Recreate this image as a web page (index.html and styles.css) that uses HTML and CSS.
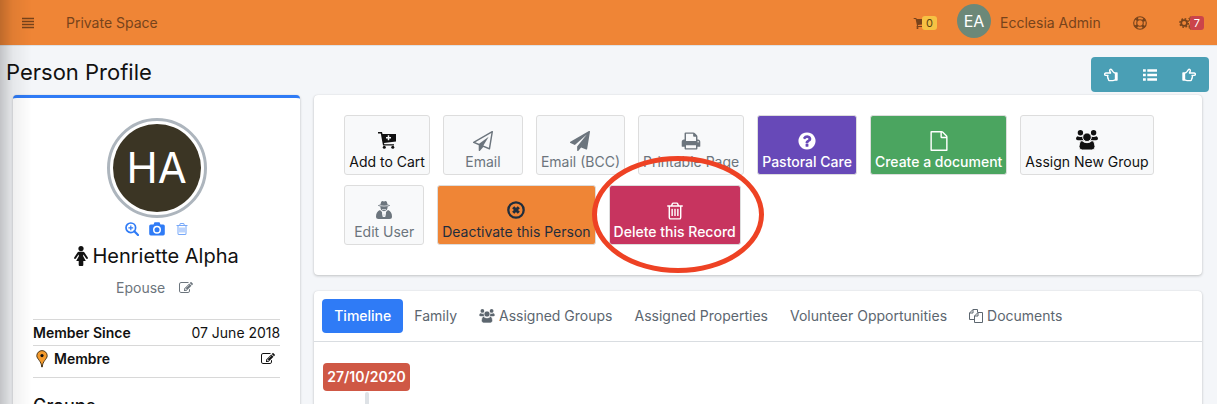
FILE: index.html
```html
<!DOCTYPE html>
<html lang="en">
<head>
<meta charset="utf-8">
<title>Person Profile</title>
<link rel="stylesheet" href="styles.css">
</head>
<body>
<svg class="sprite" aria-hidden="true">
  <symbol id="i-plane" viewBox="0 0 1792 1792"><path d="M1764 11q33 24 27 64l-256 1536q-5 29-32 45-14 8-31 8-11 0-24-5l-453-185-242 295q-18 23-49 23-13 0-22-4-19-7-30.500-23.500t-11.500-36.500v-349l864-1059-1069 925-395-162q-37-14-40-55-2-40 32-59l1664-960q15-9 32-9 20 0 36 11z"/></symbol>
  <symbol id="i-plane-o" viewBox="0 0 1792 1792"><path d="M1764 11q33 24 27 64l-256 1536q-5 29-32 45-14 8-31 8-11 0-24-5l-527-215-298 327q-18 21-47 21-14 0-23-4-19-7-30-23.500t-11-36.500v-452l-472-193q-37-14-40-55-3-39 32-59l1664-960q35-21 68 2zm-342 1499l221-1323-1434 827 336 137 863-639-478 797z"/></symbol>
  <symbol id="i-cart" viewBox="0 0 1792 1792"><path d="M704 1536q0 52-38 90t-90 38-90-38-38-90 38-90 90-38 90 38 38 90zm896 0q0 52-38 90t-90 38-90-38-38-90 38-90 90-38 90 38 38 90zm128-1088v512q0 24-16.500 42.500t-40.500 21.500l-1044 122q13 60 13 70 0 16-24 64h920q26 0 45 19t19 45-19 45-45 19h-1024q-26 0-45-19t-19-45q0-11 8-31.500t16-36 21.500-40 15.500-29.500l-177-823h-204q-26 0-45-19t-19-45 19-45 45-19h256q16 0 28.500 6.500t19.500 15.500 13 24.500 8 26 5.500 29.500 4.500 26h1201q26 0 45 19t19 45z"/></symbol>
  <symbol id="i-cart-plus" viewBox="0 0 18 18"><path d="M0 1h4l.5 2H18v7.500L6 12l.3 1.200H16v1.300H5L2.800 2.400H0z"/><circle cx="6.300" cy="16.200" r="1.500"/><circle cx="14.800" cy="16.200" r="1.500"/><path d="M10.500 4.300v5M8 6.800h5" stroke="#f8f9fa" stroke-width="1.500"/></symbol>
  <symbol id="i-print" viewBox="0 0 1792 1792"><path d="M448 1536h896v-256h-896v256zm0-640h896v-384h-160q-40 0-68-28t-28-68v-160h-640v640zm1152 64q0-26-19-45t-45-19-45 19-19 45 19 45 45 19 45-19 19-45zm128 0v416q0 13-9.500 22.500t-22.500 9.500h-224v160q0 40-28 68t-68 28h-960q-40 0-68-28t-28-68v-160h-224q-13 0-22.500-9.500t-9.500-22.500v-416q0-79 56.500-135.500t135.500-56.500h64v-544q0-40 28-68t68-28h672q40 0 88 20t76 48l152 152q28 28 48 76t20 88v256h64q79 0 135.500 56.500t56.500 135.500z"/></symbol>
  <symbol id="i-question" viewBox="0 0 1792 1792"><path d="M1024 1376v-192q0-14-9-23t-23-9h-192q-14 0-23 9t-9 23v192q0 14 9 23t23 9h192q14 0 23-9t9-23zm256-672q0-88-55.500-163t-138.500-116-170-41q-243 0-371 213-15 24 8 42l132 100q7 6 19 6 16 0 25-12 53-68 86-92 34-24 86-24 48 0 85.500 26t37.500 59q0 38-20 61t-68 45q-63 28-115.500 86.500t-52.500 125.500v36q0 14 9 23t23 9h192q14 0 23-9t9-23q0-19 21.500-49.500t54.500-49.500q32-18 49-28.500t46-35 44.500-48 28-60.500 12.500-81zm384 192q0 209-103 385.500t-279.500 279.500-385.500 103-385.500-103-279.500-279.500-103-385.500 103-385.500 279.500-279.500 385.500-103 385.500 103 279.500 279.500 103 385.500z"/></symbol>
  <symbol id="i-file" viewBox="0 0 1792 1792"><path d="M1596 380q28 28 48 76t20 88v1152q0 40-28 68t-68 28h-1344q-40 0-68-28t-28-68v-1600q0-40 28-68t68-28h896q40 0 88 20t76 48zm-444-244v376h376q-10-29-22-41l-313-313q-12-12-41-22zm384 1528v-1024h-416q-40 0-68-28t-28-68v-416h-768v1536h1280z"/></symbol>
  <symbol id="i-trash" viewBox="0 0 1792 1792"><path d="M704 736v576q0 14-9 23t-23 9h-64q-14 0-23-9t-9-23v-576q0-14 9-23t23-9h64q14 0 23 9t9 23zm256 0v576q0 14-9 23t-23 9h-64q-14 0-23-9t-9-23v-576q0-14 9-23t23-9h64q14 0 23 9t9 23zm256 0v576q0 14-9 23t-23 9h-64q-14 0-23-9t-9-23v-576q0-14 9-23t23-9h64q14 0 23 9t9 23zm128 724v-948h-896v948q0 22 7 40.500t14.500 27 10.500 8.500h832q3 0 10.500-8.500t14.500-27 7-40.500zm-672-1076h448l-48-117q-7-9-17-11h-317q-10 2-17 11zm928 32v64q0 14-9 23t-23 9h-96v948q0 83-47 143.500t-113 60.500h-832q-66 0-113-58.500t-47-141.500v-952h-96q-14 0-23-9t-9-23v-64q0-14 9-23t23-9h309l70-167q15-37 54-63t79-26h320q40 0 79 26t54 63l70 167h309q14 0 23 9t9 23z"/></symbol>
  <symbol id="i-edit" viewBox="0 0 1792 1792"><path d="M888 1184l116-116-152-152-116 116v56h96v96h56zm440-720q-16-16-33 1l-350 350q-17 17-1 33t33-1l350-350q17-17 1-33zm80 594v190q0 119-84.500 203.500t-203.500 84.500h-832q-119 0-203.500-84.500t-84.500-203.500v-832q0-119 84.500-203.500t203.500-84.500h832q63 0 117 25 15 7 18 23 3 17-9 29l-49 49q-14 14-32 8-23-6-45-6h-832q-66 0-113 47t-47 113v832q0 66 47 113t113 47h832q66 0 113-47t47-113v-126q0-13 9-22l64-64q15-15 35-7t20 29zm-96-738l288 288-672 672h-288v-288zm444 132l-92 92-288-288 92-92q28-28 68-28t68 28l152 152q28 28 28 68t-28 68z"/></symbol>
  <symbol id="i-users" viewBox="0 0 22 20"><circle cx="4.400" cy="2.800" r="2.700"/><circle cx="17.600" cy="2.800" r="2.700"/><path d="M1.500 6.200q2.500 1.300 5 .2 0 2 1.200 3.800H1.800Q0 10.200 0 8.800q0-1.900 1.500-2.600zM20.500 6.200q-2.500 1.300-5 .2 0 2-1.200 3.800h5.900q1.800 0 1.800-1.400 0-1.900-1.500-2.600z"/><g stroke="#fff" stroke-width=".9"><path d="M5.900 10.500q2 2.200 5.100 2.200t5.100-2.200q2.900 1.300 2.900 6 0 3.500-3.200 3.500H6.200Q3 20 3 16.500q0-4.700 2.900-6z"/><circle cx="11" cy="7.200" r="4.300"/></g></symbol>
  <symbol id="i-spy" viewBox="0 0 16 18"><path d="M4.500 3.600Q5 0 6.300 0L8 .5 9.700 0q1.300 0 1.800 3.600 2.500.4 2.500.9 0 .7-2.300 1-.2 4.500-3.700 4.700-3.500-.2-3.700-4.700Q2 5.200 2 4.500q0-.5 2.500-.9z"/><path d="M4 9l2 2 .8 5L8 12.500 9.200 16l.8-5 2-2q4 1.500 4 6.500 0 2.500-2.500 2.500h-11Q0 18 0 15.500 0 10.500 4 9z"/><path d="M6.700 11.300L7.500 16M9.300 11.300L8.500 16" stroke="#f8f9fa" stroke-width="1.100"/><path d="M3.500 4.600q4.500 1 9 0M6 8.600h4" stroke="#f8f9fa" stroke-width=".7" fill="none"/></symbol>
  <symbol id="i-times" viewBox="0 0 18 18"><circle cx="9" cy="9" r="7.700" fill="none" stroke="currentColor" stroke-width="2.300"/><path d="M6.200 6.200l5.600 5.600M11.800 6.200l-5.600 5.600" stroke="currentColor" stroke-width="3"/></symbol>
  <symbol id="i-ring" viewBox="0 0 16 16"><g fill="none" stroke="currentColor"><circle cx="8" cy="8" r="7.200" stroke-width="1.300"/><circle cx="8" cy="8" r="3.700" stroke-width="1.300"/><circle cx="8" cy="8" r="5.400" stroke-width="3" stroke-dasharray="3 5.480" stroke-dashoffset="-2.700"/></g></symbol>
  <symbol id="i-cogs" viewBox="0 0 18 16"><g fill="none" stroke="currentColor"><circle cx="5.700" cy="8" r="3.300" stroke-width="2"/><circle cx="5.700" cy="8" r="4.800" stroke-width="1.700" stroke-dasharray="1.900 1.870"/><circle cx="14" cy="3.700" r="2" stroke-width="1.400"/><circle cx="14" cy="3.700" r="3.100" stroke-dasharray="1.200 1.235"/><circle cx="14" cy="12.300" r="2" stroke-width="1.400"/><circle cx="14" cy="12.300" r="3.100" stroke-dasharray="1.200 1.235"/></g></symbol>
  <symbol id="i-justify" viewBox="0 0 12 12"><path d="M0 1.500h12M0 4.500h12M0 7.500h12M0 10.500h12" stroke="currentColor" stroke-width="1.300"/></symbol>
  <symbol id="i-list" viewBox="0 0 14 12"><path d="M4.300 1.500H14M4.300 6H14M4.300 10.500H14M0 1.500h2.800M0 6h2.800M0 10.500h2.800" stroke="currentColor" stroke-width="2.300"/></symbol>
  <symbol id="i-hand" viewBox="0 0 14 14"><path d="M1 5h1.800q1.200 0 2.400-1.600l1.100-1.600q.8-.9 1.600-.3.900.8-.1 2.700l-.4.800h4.800q1.200.2 1.200 1.200t-1.200 1.200H10q.8.900.1 1.900.4 1-.5 1.600.2 1.700-1.700 1.700H5.200q-1.200 0-2-.6H1z" fill="none" stroke="currentColor" stroke-width="1.400" stroke-linejoin="round"/><path d="M1 5h2.200v7H1z"/></symbol>
  <symbol id="i-zoom" viewBox="0 0 14 14"><g fill="none" stroke="currentColor"><circle cx="5.800" cy="5.800" r="4.800" stroke-width="1.700"/><path d="M9.300 9.300l3.700 3.700" stroke-width="2.200" stroke-linecap="round"/><path d="M5.800 3.400v4.800M3.400 5.800h4.800" stroke-width="1.200"/></g></symbol>
  <symbol id="i-camera" viewBox="0 0 16 14"><path fill-rule="evenodd" d="M5.500.3h5l1 2.200h2.700q1.600 0 1.600 1.600v7.700q0 1.600-1.600 1.600H1.800Q.2 13.400.2 11.800V4.100q0-1.600 1.600-1.600h2.700zM8 3.800a4 4 0 1 0 0 8 4 4 0 0 0 0-8z"/><circle cx="8" cy="7.800" r="2.500"/></symbol>
  <symbol id="i-female" viewBox="0 0 14 20"><circle cx="7" cy="2.600" r="2.600"/><path d="M4.800 5.700h4.400q.8 0 1.300.8l3.300 5q.4.800-.3 1.300-.8.500-1.400-.3L9.600 8.800h-.4v1.400l2.600 4.800H9.300v4q0 1-1 1H5.700q-1 0-1-1v-4H2.200l2.600-4.800V8.800h-.4l-2.500 3.700q-.6.800-1.400.3-.7-.5-.3-1.300l3.300-5q.5-.8 1.300-.8z"/></symbol>
  <symbol id="i-pin" viewBox="0 0 12 18"><path d="M6 .6a5.200 5.200 0 0 1 5.200 5.200C11.200 9 6.500 11 6.300 17h-.6C5.500 11 .8 9 .8 5.800A5.200 5.200 0 0 1 6 .6z" fill="#f39a2d" stroke="#3d2a10" stroke-width=".9"/><circle cx="6" cy="5.600" r="1.600" fill="#111"/></symbol>
  <symbol id="i-files" viewBox="0 0 14 14"><g fill="none" stroke="currentColor" stroke-width="1"><path d="M5.500 10.500h-5V4L4 .5h4.500v3M4 .5V4H.5M5.500 13.500V7L9 3.500h4.500v10zM9 3.500V7H5.500"/></g></symbol>
</svg>

<nav class="topbar">
  <button class="icon-btn menu" aria-label="Menu"><svg class="ic12"><use href="#i-justify"/></svg></button>
  <a class="navlink" href="#">Private Space</a>
  <div class="tools">
    <a class="counter" href="#" aria-label="Cart"><svg class="ic14"><use href="#i-cart"/></svg><span class="badge yellow">0</span></a>
    <a class="account" href="#"><span class="avatar">EA</span><span>Ecclesia Admin</span></a>
    <a class="help" href="#" aria-label="Help"><svg class="ic14"><use href="#i-ring"/></svg></a>
    <a class="counter" href="#" aria-label="Settings"><svg class="ic16"><use href="#i-cogs"/></svg><span class="badge red">7</span></a>
  </div>
</nav>

<header class="page-head">
  <h1>Person Profile</h1>
  <div class="pager">
    <button aria-label="Previous"><svg class="ic14 flip"><use href="#i-hand"/></svg></button>
    <button aria-label="List"><svg class="ic14"><use href="#i-list"/></svg></button>
    <button aria-label="Next"><svg class="ic14"><use href="#i-hand"/></svg></button>
  </div>
</header>

<main class="layout">
  <aside class="card profile">
    <div class="portrait"><span>HA</span></div>
    <div class="photo-tools">
      <button class="icon-btn" aria-label="Zoom photo"><svg class="ic14"><use href="#i-zoom"/></svg></button>
      <button class="icon-btn" aria-label="Change photo"><svg class="ic16"><use href="#i-camera"/></svg></button>
      <button class="icon-btn faded" aria-label="Delete photo"><svg class="ic14"><use href="#i-trash"/></svg></button>
    </div>
    <h2 class="name"><svg class="female"><use href="#i-female"/></svg>Henriette Alpha</h2>
    <p class="role">Epouse <button class="icon-btn" aria-label="Edit role"><svg class="ic14"><use href="#i-edit"/></svg></button></p>
    <ul class="facts">
      <li><b>Member Since</b><span>07 June 2018</span></li>
      <li class="member"><svg class="pin"><use href="#i-pin"/></svg><b>Membre</b><button class="icon-btn end" aria-label="Edit classification"><svg class="ic14"><use href="#i-edit"/></svg></button></li>
    </ul>
    <h3 class="groups">Groups</h3>
  </aside>

  <div class="column">
    <section class="card actions">
      <button class="app strong"><svg><use href="#i-cart-plus"/></svg>Add to Cart</button>
      <button class="app"><svg class="big"><use href="#i-plane-o"/></svg>Email</button>
      <button class="app"><svg class="big"><use href="#i-plane"/></svg>Email (BCC)</button>
      <button class="app"><svg class="big"><use href="#i-print"/></svg>Printable Page</button>
      <button class="app purple"><svg class="big"><use href="#i-question"/></svg>Pastoral Care</button>
      <button class="app green"><svg class="big"><use href="#i-file"/></svg>Create a document</button>
      <button class="app strong"><svg class="wide"><use href="#i-users"/></svg>Assign New Group</button>
      <button class="app"><svg><use href="#i-spy"/></svg>Edit User</button>
      <button class="app orange"><svg><use href="#i-times"/></svg>Deactivate this Person</button>
      <div class="marked">
        <button class="app crimson"><svg class="big"><use href="#i-trash"/></svg>Delete this Record</button>
        <span class="ring"></span>
      </div>
    </section>

    <section class="card">
      <nav class="tabs">
        <a class="active" href="#">Timeline</a>
        <a href="#">Family</a>
        <a href="#"><svg class="ic16"><use href="#i-users"/></svg>Assigned Groups</a>
        <a href="#">Assigned Properties</a>
        <a href="#">Volunteer Opportunities</a>
        <a href="#"><svg class="ic14"><use href="#i-files"/></svg>Documents</a>
      </nav>
      <div class="timeline"><span class="date">27/10/2020</span></div>
    </section>
  </div>
</main>
</body>
</html>
```

FILE: styles.css
```css
* { box-sizing: border-box; }
body {
  margin: 0;
  height: 100vh;
  display: flex;
  flex-direction: column;
  overflow: hidden;
  background: #f4f6f9;
  color: #111;
  font: 14px/20px Inter, "Liberation Sans", sans-serif;
}
/* shadow cast by the collapsed sidebar */
body::after {
  content: "";
  position: fixed;
  inset: 0 auto 0 0;
  width: 32px;
  background: linear-gradient(90deg, rgba(0,0,0,.2), rgba(0,0,0,.06) 40%, transparent);
  pointer-events: none;
}
h1, h2, h3, p, ul { margin: 0; padding: 0; font-weight: 400; }
button { font: inherit; color: inherit; cursor: pointer; }
a { color: inherit; text-decoration: none; }
svg { display: block; flex: none; fill: currentColor; }
.sprite { position: absolute; width: 0; height: 0; }
.ic12 { width: 12px; height: 12px; }
.ic14 { width: 14px; height: 14px; }
.ic16 { width: 16px; height: 14px; }
.flip { transform: scaleX(-1); }
.icon-btn { display: inline-flex; padding: 0; border: 0; background: none; }

.topbar {
  flex: none;
  display: flex;
  align-items: center;
  height: 46px;
  padding: 0 13px 0 22px;
  background: #ef8536;
  border-bottom: 1px solid #dee2e6;
  color: #77431b;
}
.navlink { margin-left: 32px; }
.tools { display: flex; align-items: center; margin-left: auto; }
.counter { display: flex; align-items: center; }
.badge {
  margin-left: -5px;
  padding: 0 4px;
  border-radius: 3px;
  font-size: 11px;
  line-height: 14px;
}
.yellow { background: #f6c244; color: #5a4513; }
.red { background: #cb444a; color: #fff; }
.account { display: flex; align-items: center; gap: 9px; margin: 0 32px 0 20px; }
.avatar {
  width: 34px;
  margin-bottom: 4px;
  border-radius: 50%;
  background: #6c8878;
  color: #fff;
  font-size: 16px;
  line-height: 34px;
  text-align: center;
}
.help { margin-right: 32px; }

.page-head {
  flex: none;
  display: flex;
  justify-content: space-between;
  padding: 11px 8px 3px 6px;
}
h1 { font-size: 22px; line-height: 30px; }
.pager { display: flex; gap: 1px; padding: 0 1px; border-radius: 4px; background: #4a9fb5; color: #fff; }
.pager button { display: flex; padding: 11px 12px 10px; border: 0; background: none; }

.layout {
  flex: 1;
  min-height: 0;
  display: grid;
  grid-template-columns: minmax(0, 11fr) minmax(0, 34fr);
  gap: 14px;
  padding: 0 15px 0 13px;
}
.card {
  border-radius: 4px;
  background: #fff;
  box-shadow: 0 0 1px rgba(0,0,0,.13), 0 1px 3px rgba(0,0,0,.2);
}
.profile { padding: 20px; border-top: 3px solid #2f7bf6; }
.portrait {
  width: 100px;
  margin: 0 auto;
  padding: 3px;
  border: 3px solid #adb5bd;
  border-radius: 50%;
}
.portrait span {
  display: block;
  border-radius: 50%;
  background: #3b3524;
  color: #fff;
  font-size: 42px;
  line-height: 88px;
  text-align: center;
}
.photo-tools {
  display: flex;
  justify-content: center;
  align-items: center;
  gap: 10px;
  height: 22px;
  color: #2f7bf6;
}
.faded { opacity: .65; }
.name {
  display: flex;
  justify-content: center;
  align-items: center;
  gap: 4px;
  font-size: 20px;
  line-height: 32px;
}
.female { width: 14px; height: 20px; }
.role {
  display: flex;
  justify-content: center;
  align-items: center;
  gap: 14px;
  margin: 6px 0 21px;
  padding-right: 4px;
  color: #6c757d;
}
.facts { list-style: none; border-top: 1px solid #d8d8d8; }
.facts li {
  display: flex;
  justify-content: space-between;
  padding: 3px 0 2px;
  border-bottom: 1px solid #d8d8d8;
}
.facts b { font-weight: 600; }
.facts .member { justify-content: flex-start; align-items: center; gap: 6px; padding: 3px 5px 8px 3px; }
.pin { width: 12px; height: 18px; }
.end { margin-left: auto; }
.groups { margin-top: 17px; font-size: 18px; line-height: 22px; font-weight: 500; }

.column { display: flex; flex-direction: column; gap: 16px; min-height: 0; }
.column .card:last-child { flex: 1; }
.actions {
  display: flex;
  flex-wrap: wrap;
  gap: 10px 13px;
  padding: 20px 30px 30px;
}
.app {
  display: flex;
  flex-direction: column;
  align-items: center;
  justify-content: flex-end;
  min-width: 80px;
  height: 60px;
  padding: 0 4px 2px;
  border: 1px solid #ddd;
  border-radius: 3px;
  background: #f8f9fa;
  color: #6c757d;
  white-space: nowrap;
}
.app svg { width: 18px; height: 18px; margin-bottom: 3px; }
.app svg.big { width: 20px; height: 20px; margin-bottom: 1px; }
.app svg.wide { width: 22px; height: 20px; margin-bottom: 2px; }
.app.strong { color: #111; }
.app.purple { background: #6749b8; color: #fff; font-weight: 500; }
.app.green { background: #4ba560; color: #fff; font-weight: 500; }
.app.orange { background: #ef8536; color: #1f2d3d; }
.app.crimson { background: #c7345f; color: #fff; font-weight: 500; }
.marked { position: relative; }
.ring {
  position: absolute;
  inset: -29px -23px -28px -17px;
  border: 5px solid #ee4224;
  border-radius: 50%;
  pointer-events: none;
}

.tabs {
  display: flex;
  padding: 8px;
  border-bottom: 1px solid #d9dde1;
  color: #5c666f;
}
.tabs a { display: flex; align-items: center; gap: 4px; padding: 7px 11px; border-radius: 4px; }
.tabs .active { padding: 7px 12px; background: #2f7bf6; color: #fff; font-weight: 500; }
.timeline { padding: 21px 9px; }
.date {
  display: inline-block;
  padding: 4px;
  border-radius: 4px;
  background: #cf5845;
  color: #fff;
  font-weight: 600;
}
.timeline::after {
  content: "";
  display: block;
  width: 4px;
  height: 80px;
  margin: 1px 0 0 42px;
  border-radius: 2px;
  background: #dee2e6;
}
```
